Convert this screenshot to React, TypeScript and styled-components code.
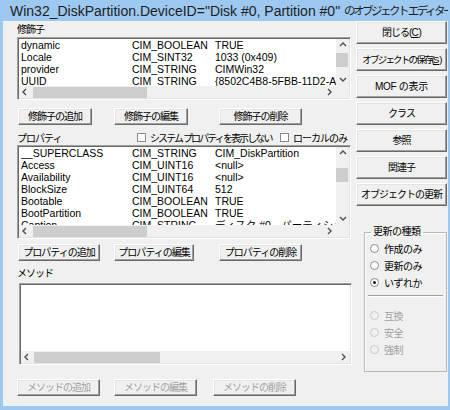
import React from 'react';
import styled, {createGlobalStyle} from 'styled-components';

type Row = [string, string, string];

const qualifiers: Row[] = [
  ['dynamic', 'CIM_BOOLEAN', 'TRUE'],
  ['Locale', 'CIM_SINT32', '1033 (0x409)'],
  ['provider', 'CIM_STRING', 'CIMWin32'],
  ['UUID', 'CIM_STRING', '{8502C4B8-5FBB-11D2-AAC1-006008C78BC7}'],
];

const properties: Row[] = [
  ['__SUPERCLASS', 'CIM_STRING', 'CIM_DiskPartition'],
  ['Access', 'CIM_UINT16', '<null>'],
  ['Availability', 'CIM_UINT16', '<null>'],
  ['BlockSize', 'CIM_UINT64', '512'],
  ['Bootable', 'CIM_BOOLEAN', 'TRUE'],
  ['BootPartition', 'CIM_BOOLEAN', 'TRUE'],
  ['Caption', 'CIM_STRING', 'ディスク #0、パーティション #0'],
];

const GlobalStyle = createGlobalStyle`
  html, body { margin: 0; padding: 0; background: #fff; }
  body {
    font-family: "Liberation Sans", "Noto Sans CJK JP", sans-serif;
    color: #000;
  }
`;

const Frame = styled.div`
  box-sizing: border-box;
  width: 450px;
  height: 410px;
  display: flex;
  flex-direction: column;
  padding: 0 2px 4px 3px;
  background: #9dc8ef;
`;

const TitleBar = styled.div`
  height: 21px;
  display: flex;
  align-items: center;
  padding-left: 7px;
  font-size: 14px;
  line-height: 16px;
  color: #1e1e1e;
  white-space: nowrap;
  overflow: hidden;
  .jp {
    font-size: 11.5px;
    letter-spacing: -2.5px;
  }
`;

const Body = styled.div`
  flex: 1;
  display: flex;
  background: #f0f0f0;
  font-size: 10.5px;
`;

const LeftPane = styled.div`
  width: 335px;
  padding-left: 14px;
  display: flex;
  flex-direction: column;
`;

const RightPane = styled.div`
  width: 91px;
  margin-left: 4px;
  display: flex;
  flex-direction: column;
  gap: 4px;
`;

const Label = styled.div<{$mt: number}>`
  margin-top: ${p => p.$mt}px;
  height: 12px;
  line-height: 12px;
  font-size: 10px;
  letter-spacing: -1px;
`;

const ListBox = styled.div<{$w: number; $h: number; $mt: number; $ml?: number; $vscroll?: boolean}>`
  box-sizing: border-box;
  width: ${p => p.$w}px;
  height: ${p => p.$h}px;
  margin-top: ${p => p.$mt}px;
  margin-left: ${p => p.$ml ?? 0}px;
  flex-shrink: 0;
  border: 1px solid;
  border-color: #a0a0a0 #fff #fff #a0a0a0;
  padding: 1px;
  box-shadow: inset 1px 1px #696969, inset -1px -1px #e3e3e3;
  background: #fff;
  display: grid;
  grid-template-columns: ${p => (p.$vscroll ? '1fr 13px' : '1fr')};
  grid-template-rows: 1fr 12px;
  overflow: hidden;
`;

const Rows = styled.div`
  overflow: hidden;
  padding-left: 2px;
`;

const ItemRow = styled.div`
  display: grid;
  grid-template-columns: 111px 83px 1fr;
  height: 12px;
  line-height: 12px;
  white-space: nowrap;
  span { overflow: hidden; }
  .v { overflow: visible; }
`;

const VScroll = styled.div`
  display: flex;
  flex-direction: column;
  background: #f0f0f0;
`;

const HScroll = styled.div`
  display: flex;
  align-items: stretch;
  background: #f0f0f0;
`;

const Arrow = styled.div`
  flex: 0 0 12px;
  display: flex;
  align-items: center;
  justify-content: center;
`;

const Track = styled.div`
  flex: 1;
  position: relative;
`;

const VThumb = styled.div<{$top: number; $h: number}>`
  position: absolute;
  left: 0;
  right: 1px;
  top: ${p => p.$top}px;
  height: ${p => p.$h}px;
  background: #cdcdcd;
`;

const HThumb = styled.div<{$left: number; $w: number}>`
  position: absolute;
  top: 1px;
  bottom: 0;
  left: ${p => p.$left}px;
  width: ${p => p.$w}px;
  background: #cdcdcd;
`;

const Corner = styled.div`
  background: #f0f0f0;
`;

const ButtonRow = styled.div<{$mt: number}>`
  display: flex;
  height: 17px;
  margin-top: ${p => p.$mt}px;
  flex-shrink: 0;
`;

const Button = styled.button<{$w?: number; $ml?: number; $h?: number; $ls?: number; $fs?: number}>`
  box-sizing: border-box;
  width: ${p => (p.$w ? `${p.$w}px` : '100%')};
  height: ${p => (p.$h ? `${p.$h}px` : '100%')};
  margin: 0 0 0 ${p => p.$ml ?? 0}px;
  padding: 0;
  flex-shrink: 0;
  font-family: inherit;
  font-size: ${p => p.$fs ?? 10}px;
  line-height: 12px;
  letter-spacing: ${p => p.$ls ?? -1}px;
  color: #000;
  background: #f0f0f0;
  border: 1px solid;
  border-color: #fff #696969 #696969 #fff;
  box-shadow: inset -1px -1px #a0a0a0, inset 1px 1px #e3e3e3;
  white-space: nowrap;
  overflow: hidden;
  &:disabled { color: #a0a0a0; }
  u { text-decoration-thickness: 1px; text-underline-offset: 1px; letter-spacing: 0; }
`;

const HeaderRow = styled.div`
  display: grid;
  grid-template-columns: 120px 143px auto;
  align-items: center;
  height: 14px;
  margin-top: 5px;
  font-size: 10px;
  letter-spacing: -1px;
`;

const Check = styled.label<{$ls?: number}>`
  display: flex;
  align-items: center;
  gap: 4px;
  white-space: nowrap;
  letter-spacing: ${p => p.$ls ?? -1}px;
`;

const CheckBox = styled.span`
  box-sizing: border-box;
  flex-shrink: 0;
  width: 9px;
  height: 9px;
  border: 1px solid #8a8a8a;
  background: #fff;
`;

const Group = styled.fieldset`
  box-sizing: border-box;
  width: 83px;
  height: 146px;
  margin: 16px 0 0 8px;
  padding: 0 2px 0 0;
  border: 1px solid #b9b9b9;
  box-shadow: inset 1px 1px #fff;
  min-width: 0;
  legend {
    margin-left: 6px;
    padding: 0 2px;
    font-size: 10px;
    line-height: 12px;
    letter-spacing: -0.5px;
  }
`;

const RadioRow = styled.div<{$disabled?: boolean}>`
  display: flex;
  align-items: center;
  height: 17px;
  padding-left: 5px;
  gap: 5px;
  font-size: 10px;
  letter-spacing: -0.5px;
  white-space: nowrap;
  color: ${p => (p.$disabled ? '#a0a0a0' : '#000')};
  &:first-of-type { margin-top: 2px; }
`;

const RadioDot = styled.span<{$checked?: boolean; $disabled?: boolean}>`
  box-sizing: border-box;
  flex-shrink: 0;
  width: 9px;
  height: 9px;
  border-radius: 50%;
  border: 1px solid ${p => (p.$disabled ? '#c8c8c8' : '#8a8a8a')};
  background: ${p => (p.$disabled ? '#f0f0f0' : '#fff')};
  display: flex;
  align-items: center;
  justify-content: center;
  &::after {
    content: '';
    display: ${p => (p.$checked ? 'block' : 'none')};
    width: 3px;
    height: 3px;
    border-radius: 50%;
    background: #1a1a1a;
  }
`;

const Separator = styled.div`
  height: 1px;
  margin: 4px 1px 11px 3px;
  background: #a0a0a0;
  box-shadow: 0 1px #fff;
`;

const Chevron = ({dir}: {dir: 'up' | 'down' | 'left' | 'right'}) => {
  const pts = {
    up: '1,5 4,2 7,5',
    down: '1,2 4,5 7,2',
    left: '5,1 2,4 5,7',
    right: '2,1 5,4 2,7',
  }[dir];
  return (
    <svg width="8" height="8" viewBox="0 0 8 8">
      <polyline points={pts} fill="none" stroke="#505050" strokeWidth="1.4" />
    </svg>
  );
};

const VBar = ({top, h}: {top: number; h: number}) => (
  <VScroll>
    <Arrow><Chevron dir="up" /></Arrow>
    <Track><VThumb $top={top} $h={h} /></Track>
    <Arrow><Chevron dir="down" /></Arrow>
  </VScroll>
);

const HBar = ({left, w}: {left: number; w: number}) => (
  <HScroll>
    <Arrow><Chevron dir="left" /></Arrow>
    <Track><HThumb $left={left} $w={w} /></Track>
    <Arrow><Chevron dir="right" /></Arrow>
  </HScroll>
);

const ItemList = ({rows}: {rows: Row[]}) => (
  <Rows>
    {rows.map(([name, type, value]) => (
      <ItemRow key={name}>
        <span>{name}</span>
        <span>{type}</span>
        <span className="v">{value}</span>
      </ItemRow>
    ))}
  </Rows>
);

export default function App() {
  return (
    <Frame>
      <GlobalStyle />
      <TitleBar>
        Win32_DiskPartition.DeviceID="Disk #0, Partition #0"&nbsp;<span className="jp">のオブジェクト エディター</span>
      </TitleBar>
      <Body>
        <LeftPane>
          <Label $mt={3}>修飾子</Label>
          <ListBox $w={334} $h={63} $mt={1} $vscroll>
            <ItemList rows={qualifiers} />
            <VBar top={2} h={14} />
            <HBar left={2} w={114} />
            <Corner />
          </ListBox>
          <ButtonRow $mt={8}>
            <Button $w={74} $ml={1}>修飾子の追加</Button>
            <Button $w={74} $ml={22}>修飾子の編集</Button>
            <Button $w={83} $ml={31}>修飾子の削除</Button>
          </ButtonRow>

          <HeaderRow>
            <span>プロパティ</span>
            <Check $ls={-1.9}><CheckBox />システム プロパティを表示しない</Check>
            <Check><CheckBox />ローカルのみ</Check>
          </HeaderRow>
          <ListBox $w={334} $h={94} $mt={1} $vscroll>
            <ItemList rows={properties} />
            <VBar top={9} h={14} />
            <HBar left={2} w={114} />
            <Corner />
          </ListBox>
          <ButtonRow $mt={5}>
            <Button $w={82} $ml={1}>プロパティの追加</Button>
            <Button $w={80} $ml={14}>プロパティの編集</Button>
            <Button $w={83} $ml={25}>プロパティの削除</Button>
          </ButtonRow>

          <Label $mt={7}>メソッド</Label>
          <ListBox $w={333} $h={82} $mt={3} $ml={2}>
            <Rows />
            <HBar left={1} w={126} />
          </ListBox>
          <ButtonRow $mt={14}>
            <Button $w={83} disabled>メソッドの追加</Button>
            <Button $w={83} $ml={14} disabled>メソッドの編集</Button>
            <Button $w={83} $ml={16} disabled>メソッドの削除</Button>
          </ButtonRow>
        </LeftPane>

        <RightPane>
          <Button $h={23}>閉じる(<u>C</u>)</Button>
          <Button $h={23} $fs={9.5} $ls={-1.8}>オブジェクトの保存(<u>S</u>)</Button>
          <Button $h={23} $ls={-0.3}>MOF の表示</Button>
          <Button $h={23}>クラス</Button>
          <Button $h={23}>参照</Button>
          <Button $h={23}>関連子</Button>
          <Button $h={23}>オブジェクトの更新</Button>
          <Group>
            <legend>更新の種類</legend>
            <RadioRow><RadioDot />作成のみ</RadioRow>
            <RadioRow><RadioDot />更新のみ</RadioRow>
            <RadioRow><RadioDot $checked />いずれか</RadioRow>
            <Separator />
            <RadioRow $disabled><RadioDot $disabled />互換</RadioRow>
            <RadioRow $disabled><RadioDot $disabled />安全</RadioRow>
            <RadioRow $disabled><RadioDot $disabled />強制</RadioRow>
          </Group>
        </RightPane>
      </Body>
    </Frame>
  );
}
